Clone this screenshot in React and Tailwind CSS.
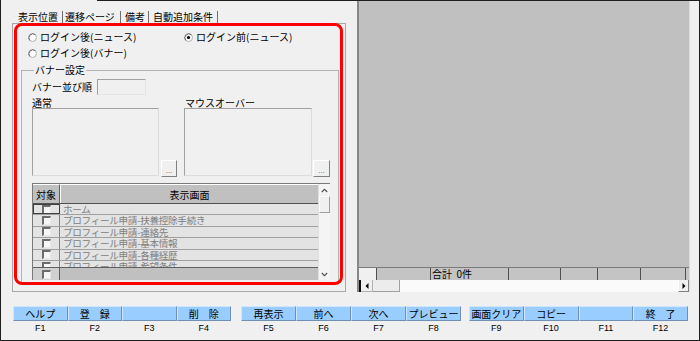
import React from "react";

const Radio = ({ checked }) => (
  <svg width="9" height="9" viewBox="0 0 9 9" className="shrink-0">
    <circle cx="4.5" cy="4.5" r="4" fill="#ffffff" stroke="#b0b0b0" strokeWidth="1" />
    <path d="M1.7 7.3 A4 4 0 0 1 7.3 1.7" fill="none" stroke="#6a6a6a" strokeWidth="1" />
    {checked && <circle cx="4.5" cy="4.5" r="1.6" fill="#000000" />}
  </svg>
);

const Check = () => (
  <div className="w-[9px] h-[9px] border-t-2 border-l-2 border-[#6b6b6b] border-r border-b border-r-[#e8e8e8] border-b-[#e8e8e8] bg-[#f6f6f6]" />
);

const rows = [
  "ホーム",
  "プロフィール申請-扶養控除手続き",
  "プロフィール申請-連絡先",
  "プロフィール申請-基本情報",
  "プロフィール申請-各種経歴",
  "プロフィール申請-希望条件",
];

const groups = [
  { w: "w-[218px]", ml: "ml-0", items: [["ヘルプ", "F1"], ["登　録", "F2"], ["", "F3"], ["削　除", "F4"]] },
  { w: "w-[220px]", ml: "ml-[10px]", items: [["再表示", "F5"], ["前へ", "F6"], ["次へ", "F7"], ["プレビュー", "F8"]] },
  { w: "w-[219px]", ml: "ml-[8px]", items: [["画面クリア", "F9"], ["コピー", "F10"], ["", "F11"], ["終　了", "F12"]] },
];

const DotsBtn = ({ w }) => (
  <div className={`${w} h-[17px] bg-[#f0f0f0] border-t border-l border-white border-r border-b border-r-[#808080] border-b-[#808080] flex items-end justify-center pb-[1px]`}>
    <span className="text-[8px] leading-[8px] text-[#606060] font-['Liberation_Sans',sans-serif]">...</span>
  </div>
);

export default function App() {
  return (
    <div className="w-[700px] h-[341px] bg-[#f0f0f0] overflow-hidden border-l border-r border-b border-[#1e1e1e] flex flex-col text-[10px] text-black font-['Noto_Sans_CJK_JP',sans-serif]">
      {/* top strip */}
      <div className="h-[1px] flex shrink-0">
        <div className="w-[96px] bg-[#f0f0f0]" />
        <div className="flex-1 bg-[#1e1e1e]" />
      </div>

      {/* main */}
      <div className="h-[291px] flex shrink-0">
        {/* left column */}
        <div className="w-[356px] flex flex-col">
          {/* tabs */}
          <div className="h-[22px] pl-[17px] pt-[10px] flex items-start leading-[12px]">
            <span className="w-[40px]">表示位置</span>
            <span className="ml-[4px] w-[1px] h-[12px] bg-[#707070]" />
            <span className="ml-[2px] w-[50px]">遷移ページ</span>
            <span className="ml-[5px] w-[1px] h-[12px] bg-[#707070]" />
            <span className="ml-[4px] w-[20px]">備考</span>
            <span className="ml-[3px] w-[1px] h-[12px] bg-[#707070]" />
            <span className="ml-[4px] w-[60px]">自動追加条件</span>
            <span className="ml-[4px] w-[1px] h-[12px] bg-[#707070]" />
          </div>

          {/* tab page */}
          <div className="relative ml-[11px] w-[334px] h-[269px] border border-[#a8a8a8] flex flex-col">
            {/* radios */}
            <div className="pt-[7px] pl-[15px] flex flex-col gap-[4px]">
              <div className="h-[12px] flex items-center">
                <div className="w-[156px] flex items-center gap-[3px]">
                  <Radio />
                  <span className="leading-[12px]">ログイン後(ニュース)</span>
                </div>
                <div className="flex items-center gap-[3px]">
                  <Radio checked />
                  <span className="leading-[12px]">ログイン前(ニュース)</span>
                </div>
              </div>
              <div className="h-[12px] flex items-center gap-[3px]">
                <Radio />
                <span className="leading-[12px]">ログイン後(バナー)</span>
              </div>
            </div>

            {/* group box */}
            <fieldset className="mt-[5px] ml-[8px] w-[318px] border border-[#b4b4b4] pl-[10px] pb-[2px]">
              <legend className="ml-[2px] px-[1px] leading-[12px]">バナー設定</legend>
              <div className="mt-[3px] h-[16px] flex items-center">
                <span className="w-[60px] leading-[12px]">バナー並び順</span>
                <div className="ml-[5px] w-[49px] h-[16px] bg-[#f0f0f0] border-t border-l border-[#a0a0a0] border-r border-b border-r-[#e4e4e4] border-b-[#e4e4e4]" />
              </div>
              <div className="mt-[2px] h-[11px] flex items-end leading-[11px]">
                <span className="w-[153px]">通常</span>
                <span>マウスオーバー</span>
              </div>
              <div className="h-[69px] flex items-end">
                <div className="w-[127px] h-[68px] self-start bg-[#f0f0f0] border-t border-l border-[#a0a0a0] border-r border-b border-r-[#dcdcdc] border-b-[#dcdcdc]" />
                <div className="ml-[2px]"><DotsBtn w="w-[16px]" /></div>
                <div className="ml-[7px] w-[128px] h-[68px] self-start bg-[#f0f0f0] border-t border-l border-[#a0a0a0] border-r border-b border-r-[#dcdcdc] border-b-[#dcdcdc]" />
                <div className="ml-[1px]"><DotsBtn w="w-[17px]" /></div>
              </div>

              {/* grid */}
              <div className="mt-[6px] w-[298px] h-[97px] flex border-t border-l border-[#7a7a7a]">
                <div className="w-[285px] flex flex-col">
                  <div className="h-[20px] flex bg-[#c0c0c0] border-b border-[#505050] shrink-0">
                    <div className="w-[27px] flex items-center justify-center border-r border-[#606060] border-t border-t-white">対象</div>
                    <div className="flex-1 flex items-center justify-center border-l border-white border-t border-t-white">表示画面</div>
                  </div>
                  <div className="h-[63px] overflow-hidden flex flex-col shrink-0">
                    {rows.map((r, i) => (
                      <div key={i} className="h-[11.4px] shrink-0 flex bg-[#e3e3e3] border-b border-[#a0a0a0]">
                        <div className={`w-[27px] flex items-center justify-center border-r border-[#808080] ${i === 0 ? "outline outline-1 -outline-offset-1 outline-[#404040]" : ""}`}>
                          <Check />
                        </div>
                        <div className="flex-1 pl-[3px] text-[#808080] text-[9.6px] leading-[10.4px] tracking-[-0.3px] whitespace-nowrap">{r}</div>
                      </div>
                    ))}
                  </div>
                  <div className="flex-1 flex border-t border-[#606060] bg-[#c0c0c0]">
                    <div className="w-[27px] flex items-center justify-center border-r border-[#606060] bg-[#d0d0d0]">
                      <Check />
                    </div>
                    <div className="flex-1" />
                  </div>
                </div>
                {/* vertical scrollbar */}
                <div className="w-[12px] flex flex-col bg-[#f4f4f4] border-l border-[#e0e0e0]">
                  <div className="h-[12px] flex items-center justify-center shrink-0">
                    <svg width="7" height="5" viewBox="0 0 7 5"><path d="M0.8 4 L3.5 1.3 L6.2 4" fill="none" stroke="#505050" strokeWidth="1.1" /></svg>
                  </div>
                  <div className="h-[17px] shrink-0 bg-[#f0f0f0] border-t border-l border-white border-r border-b border-r-[#a0a0a0] border-b-[#a0a0a0]" />
                  <div className="flex-1" />
                  <div className="h-[12px] flex items-center justify-center shrink-0">
                    <svg width="7" height="5" viewBox="0 0 7 5"><path d="M0.8 1 L3.5 3.7 L6.2 1" fill="none" stroke="#505050" strokeWidth="1.1" /></svg>
                  </div>
                </div>
              </div>
            </fieldset>

            {/* red annotation */}
            <div className="absolute left-[1px] top-[-1px] w-[329px] h-[262px] border-[3px] border-[#ff0000] rounded-[8px] pointer-events-none" />
          </div>
        </div>

        {/* right column */}
        <div className="w-[332px] flex flex-col border-l-2 border-[#888888]">
          <div className="flex-1 bg-[#c0c0c0]" />
          <div className="h-[13px] flex border-t border-[#7a7a7a] bg-[#c4c4c4] shrink-0 leading-[12px]">
            <div className="w-[17px] bg-[#f0f0f0]" />
            <div className="w-[54px] border-l border-[#505050]" />
            <div className="w-[78px] border-l border-[#505050] pl-[1px]">合計&nbsp;&nbsp;0件</div>
            <div className="w-[52px] border-l border-[#505050]" />
            <div className="w-[37px] border-l border-[#505050]" />
            <div className="w-[43px] border-l border-[#505050]" />
            <div className="w-[45px] border-l border-[#505050]" />
            <div className="flex-1 border-l border-[#505050]" />
          </div>
          <div className="h-[12px] flex bg-[#fafafa] shrink-0">
            <div className="w-[2px] bg-[#101010]" />
            <div className="w-[12px] flex items-center justify-center bg-[#f0f0f0] border-r border-b border-[#b0b0b0]">
              <svg width="4" height="6" viewBox="0 0 4 6"><path d="M3.5 0 L0.5 3 L3.5 6 Z" fill="#000000" /></svg>
            </div>
            <div className="w-[27px] bg-[#ececec] border-r border-b border-[#a0a0a0]" />
            <div className="flex-1" />
            <div className="w-[11px] flex items-center justify-center bg-[#f0f0f0] border-l border-white border-r border-b border-r-[#808080] border-b-[#808080]">
              <svg width="4" height="6" viewBox="0 0 4 6"><path d="M0.5 0 L3.5 3 L0.5 6 Z" fill="#000000" /></svg>
            </div>
          </div>
        </div>

        <div className="w-[10px] border-l border-[#dcdcdc]" />
      </div>

      {/* bottom button bar */}
      <div className="flex-1 pl-[12px] pt-[14px] flex items-start">
        {groups.map((g, gi) => (
          <div key={gi} className={`${g.w} ${g.ml} grid grid-cols-4`}>
            {g.items.map(([label, key]) => (
              <div key={key} className="flex flex-col items-stretch">
                <div className="h-[15px] bg-[#99ccff] border-t border-l border-[#cfe6ff] border-r border-b border-r-[#6f8fb3] border-b-[#6f8fb3] flex items-center justify-center leading-[12px] whitespace-nowrap">
                  {label}
                </div>
                <div className="mt-[2px] text-center text-[9px] leading-[10px] font-['Liberation_Sans',sans-serif]">{key}</div>
              </div>
            ))}
          </div>
        ))}
      </div>
    </div>
  );
}
